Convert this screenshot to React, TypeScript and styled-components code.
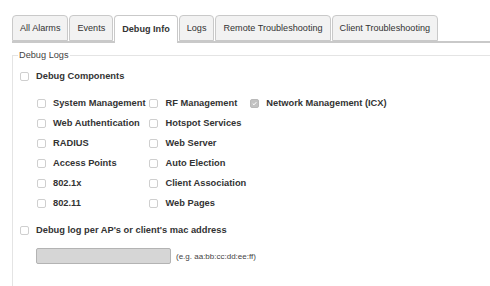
import React from "react";
import styled, { createGlobalStyle } from "styled-components";

const GlobalStyle = createGlobalStyle`
    body {
        margin: 0;
        background: #fff;
        color: #333;
        font-family: "Liberation Sans", Arial, Helvetica, sans-serif;
    }
`;

const Page = styled.div`
    padding: 15px 0 0 12px;
    height: 271px;
    overflow: hidden;
`;

const TabBar = styled.div`
    display: flex;
    align-items: flex-end;
    gap: 1px;
    height: 26px;
    border-bottom: 2px solid #c9c9c9;
`;

const Tab = styled.div<{ $active?: boolean }>`
    box-sizing: border-box;
    display: flex;
    align-items: center;
    height: ${props => props.$active ? "28px" : "26px"};
    margin-bottom: ${props => props.$active ? "-2px" : "0"};
    padding: ${props => props.$active ? "0 7px 2px" : "0 7px"};
    border: 1px solid #c9c9c9;
    border-bottom: ${props => props.$active ? "none" : "1px solid #c9c9c9"};
    border-radius: 4px 4px 0 0;
    background: ${props => props.$active ? "#fff" : "#f2f2f2"};
    font-size: 9.1px;
    font-weight: ${props => props.$active ? 700 : 400};
    color: #333;
    white-space: nowrap;
`;

const Fieldset = styled.fieldset`
    margin: 7px 0 0;
    padding: 5px 0 0 7px;
    min-height: 240px;
    border: 1px solid #e4e4e4;
    border-right: none;
    border-bottom: none;
`;

const Legend = styled.legend`
    margin-left: -2px;
    padding: 0 1px;
    font-size: 9.2px;
    line-height: 11px;
    color: #444;
`;

const Option = styled.label`
    display: flex;
    align-items: center;
    gap: 7px;
    height: 20px;
    font-size: 9.3px;
    font-weight: 700;
    color: #333;
    white-space: nowrap;
`;

const Box = styled.span<{ $checked?: boolean }>`
    box-sizing: border-box;
    display: inline-flex;
    align-items: center;
    justify-content: center;
    width: 9px;
    height: 9px;
    flex: none;
    border: 1px solid ${props => props.$checked ? "#b9b9b9" : "#cfcfcf"};
    border-radius: 2px;
    background: ${props => props.$checked ? "#c2c2c2" : "#fff"};
`;

const SubGrid = styled.div`
    display: grid;
    grid-template-columns: auto auto auto;
    justify-content: start;
    column-gap: 4px;
    margin: 7px 0 0 17px;
`;

const MacRow = styled.div`
    display: flex;
    align-items: center;
    gap: 5px;
    margin: 8px 0 0 16px;
`;

const MacInput = styled.input`
    box-sizing: border-box;
    width: 135px;
    height: 16px;
    margin: 0;
    border: 1px solid #b3b3b3;
    border-radius: 2px;
    background: #d6d6d6;
`;

const Hint = styled.span`
    font-size: 8px;
    color: #444;
`;

const Spacer = styled.div`
    height: 7px;
`;

function Check({ label, checked }: { label?: string; checked?: boolean }) {
    return (
        <Option>
            <Box $checked={checked}>
                {checked && (
                    <svg width="5" height="5" viewBox="0 0 10 10">
                        <path d="M1.5 5.2 L4 7.6 L8.6 2.4" fill="none" stroke="#fff" strokeWidth="2" />
                    </svg>
                )}
            </Box>
            {label}
        </Option>
    );
}

const tabs = ["All Alarms", "Events", "Debug Info", "Logs", "Remote Troubleshooting", "Client Troubleshooting"];

const components: [string, boolean?][] = [
    ["System Management"], ["RF Management"], ["Network Management (ICX)", true],
    ["Web Authentication"], ["Hotspot Services"], [""],
    ["RADIUS"], ["Web Server"], [""],
    ["Access Points"], ["Auto Election"], [""],
    ["802.1x"], ["Client Association"], [""],
    ["802.11"], ["Web Pages"], [""],
];

export default function App() {
    return (
        <Page>
            <GlobalStyle />
            <TabBar>
                {tabs.map(t => <Tab key={t} $active={t === "Debug Info"}>{t}</Tab>)}
            </TabBar>
            <Fieldset>
                <Legend>Debug Logs</Legend>
                <Check label="Debug Components" />
                <SubGrid>
                    {components.map(([label, checked], i) =>
                        label ? <Check key={i} label={label} checked={checked} /> : <span key={i} />
                    )}
                </SubGrid>
                <Spacer />
                <Check label="Debug log per AP's or client's mac address" />
                <MacRow>
                    <MacInput type="text" disabled />
                    <Hint>(e.g. aa:bb:cc:dd:ee:ff)</Hint>
                </MacRow>
            </Fieldset>
        </Page>
    );
}
